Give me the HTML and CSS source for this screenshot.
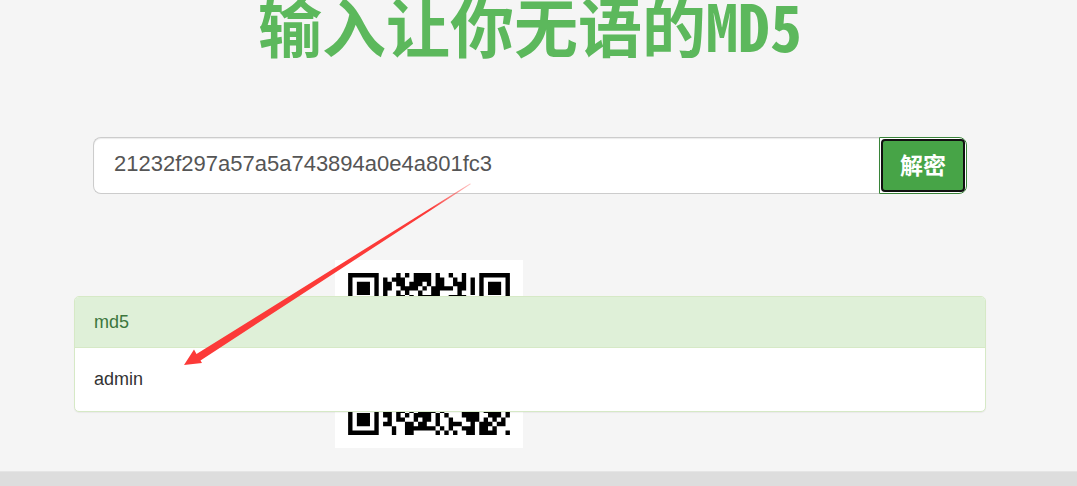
FILE: index.html
```html
<!DOCTYPE html>
<html lang="zh-CN">
<head>
<meta charset="utf-8">
<title>MD5</title>
<link rel="stylesheet" href="styles.css">
</head>
<body>
<main class="container">
  <h1 class="title">输入让你无语的MD5</h1>
  <form class="search" onsubmit="return false">
    <input class="search-input" type="text" aria-label="MD5" value="21232f297a57a5a743894a0e4a801fc3">
    <button class="search-button" type="submit"><span class="search-label">解密</span></button>
  </form>
  <div class="stage">
    <svg class="qr" viewBox="-3 -3 43 43" role="img" aria-label="QR"><path id="modules"/></svg>
    <section class="panel">
      <div class="panel-heading">md5</div>
      <div class="panel-body">admin</div>
    </section>
  </div>
</main>
<footer class="footer"></footer>
<svg class="arrow" viewBox="0 0 288 184" aria-hidden="true">
  <defs><linearGradient id="fade" gradientUnits="userSpaceOnUse" x1="246" y1="27" x2="287" y2="1"><stop offset="0" stop-color="#fc3a38"/><stop offset="1" stop-color="#fc3a38" stop-opacity=".3"/></linearGradient></defs>
  <path fill="url(#fade)" d="M0 182 10 166.500 12.500 171 286 .5 287 1 16.500 177.500 18 180Z"/>
</svg>
<script src="qr.js"></script>
</body>
</html>
```
FILE: qr.js
```js
// Dark modules by row, as inclusive column ranges.
const rows = {
  0: "11 13 15-18 20 23 26",
  1: "8 10-12 15-18 20-21 24 26 28",
  2: "8-9 11-12 14-16 18 20-21 24-26 28",
  3: "8-9 12-14 15 17 19-23 25-26 28",
  4: "8 11 13 16 19-20 25 28",
  5: "8 11-12 14 16-20 23-26",
  31: "8-9 11-12 14 16-19 21 26-29 31-34 36",
  32: "8-9 11 13 15-18 20 22 26-29 32-34 36",
  33: "9 11-12 15 17-18 20 23 27-29 31 33 35",
  34: "8-9 13-14 16-17 20 23-25 28 30-32 34-35",
  35: "10 13-19 21 23 26-28 30-31 33",
  36: "10 13-14 20 22 24 27-28 30-33 36"
};
let d = "";
for (const [y, spec] of Object.entries(rows)) {
  for (const part of spec.split(" ")) {
    const [a, b = a] = part.split("-").map(Number);
    d += `M${a} ${y}h${b - a + 1}v1H${a}z`;
  }
}
// Finder patterns
for (const [x, y] of [[0, 0], [30, 0], [0, 30]]) {
  d += `M${x} ${y}h7v7h-7zM${x + 1} ${y + 1}v5h5v-5zM${x + 2} ${y + 2}h3v3h-3z`;
}
document.getElementById("modules").setAttribute("d", d);
```
FILE: styles.css
```css
* { box-sizing: border-box; }
body {
  position: relative;
  display: flex;
  flex-direction: column;
  min-height: 100vh;
  margin: 0;
  background: #f5f5f5;
  color: #333;
  font-family: "Liberation Sans", "Noto Sans CJK SC", sans-serif;
  font-size: 18px;
}
.container {
  flex: 1;
  padding: 0 91px 0 74px;
}
.title {
  margin: 0 0 89px;
  color: #5cb85c;
  font-family: "Noto Sans CJK SC", sans-serif;
  font-feature-settings: "hwid";
  font-size: 64px;
  font-weight: 700;
  line-height: 48px;
  text-align: center;
}
.search {
  display: flex;
  margin: 0 19px 66px;
}
.search-input {
  flex: 1;
  min-width: 0;
  height: 57px;
  padding: 0 20px 4px;
  border: 1px solid #ccc;
  border-right: 0;
  border-radius: 8px 0 0 8px;
  outline: 0;
  background: #fff;
  box-shadow: inset 0 1px 1px rgba(0, 0, 0, .08);
  color: #555;
  font: 22px "Liberation Sans", sans-serif;
}
.search-button {
  width: 88px;
  padding: 0;
  border: 1px solid #398439;
  border-radius: 0 8px 8px 0;
  background: #fff;
  color: #fff;
  font: 700 23px "Noto Sans CJK SC", sans-serif;
}
.search-label {
  display: flex;
  align-items: center;
  justify-content: center;
  height: 53px;
  margin: 0 1px;
  padding-bottom: 4px;
  border: 2px solid #101010;
  border-radius: 4px;
  background: #47a447;
}
.stage {
  display: grid;
}
.qr {
  grid-area: 1 / 1;
  width: 188px;
  height: 188px;
  margin-left: 261px;
  background: #fff;
}
.panel {
  grid-area: 1 / 1;
  align-self: start;
  margin-top: 36px;
  overflow: hidden;
  border: 1px solid #d6e9c6;
  border-radius: 5px;
  background: #fff;
  box-shadow: 0 1px 1px rgba(0, 0, 0, .05);
}
.panel-heading {
  padding: 13px 19px 12px;
  border-bottom: 1px solid #d6e9c6;
  background: #dff0d8;
  color: #3c763d;
  line-height: 25px;
}
.panel-body {
  padding: 19px;
  line-height: 25px;
}
.footer {
  height: 15px;
  border-top: 1px solid #e5e5e5;
  background: #ddd;
}
.arrow {
  position: absolute;
  top: 183px;
  left: 184px;
  width: 288px;
  height: 184px;
  pointer-events: none;
}
```
